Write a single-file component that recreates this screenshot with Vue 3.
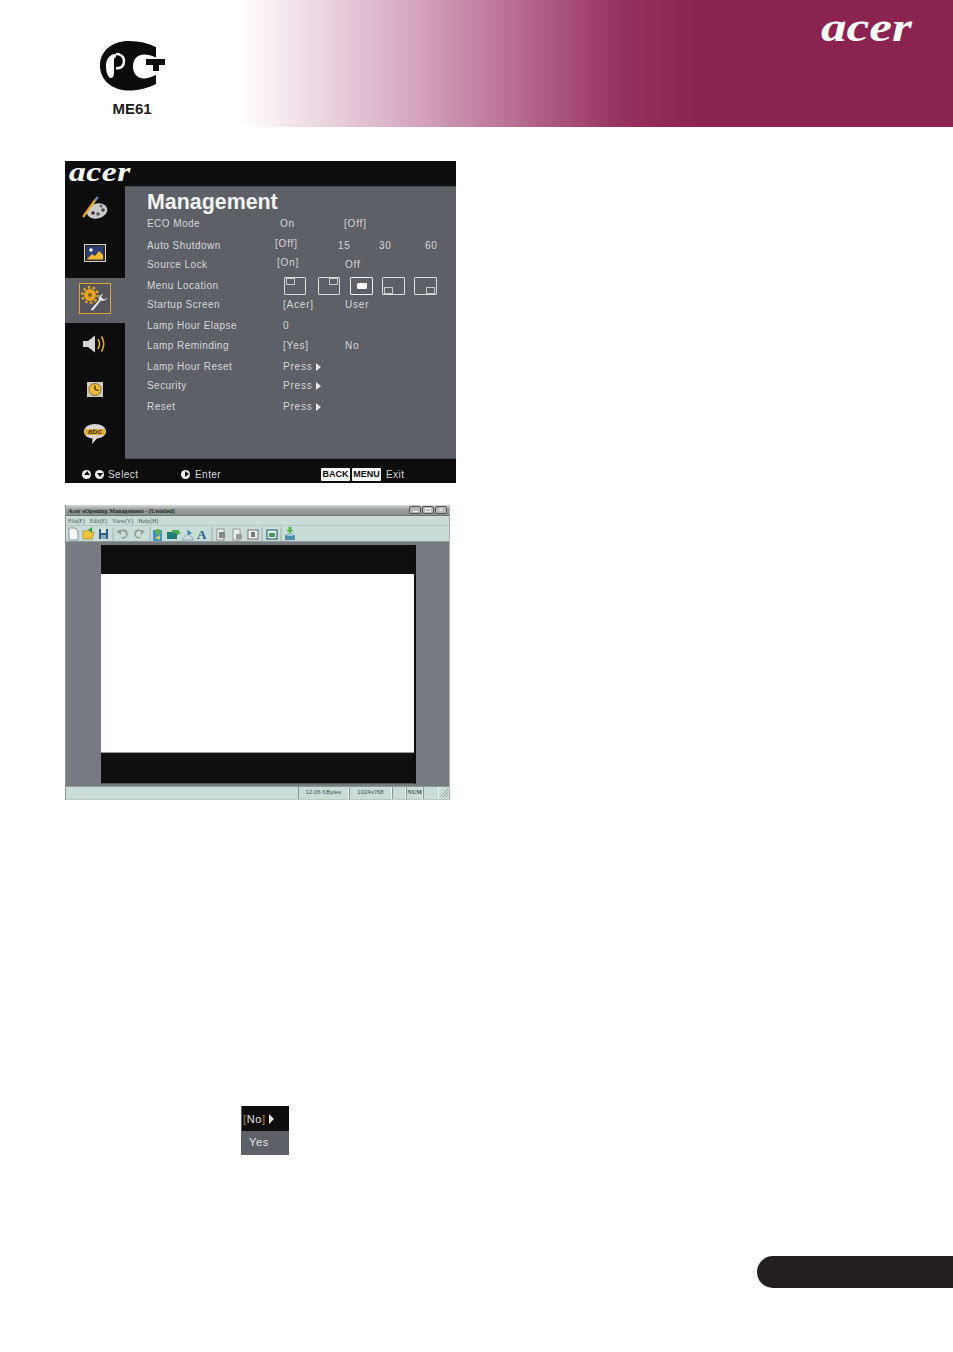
<script setup>
const rows = [
  { label: "ECO Mode", gap: 0, vals: [{ t: "On", x: 280 }, { t: "[Off]", x: 344 }] },
  { label: "Auto Shutdown", gap: 2, vals: [{ t: "[Off]", x: 275, up: true }, { t: "15", x: 338 }, { t: "30", x: 379 }, { t: "60", x: 425 }] },
  { label: "Source Lock", gap: -1, vals: [{ t: "[On]", x: 277, up: true }, { t: "Off", x: 345 }] },
  { label: "Menu Location", gap: 1, thumbs: true },
  { label: "Startup Screen", gap: -1, vals: [{ t: "[Acer]", x: 283 }, { t: "User", x: 345 }] },
  { label: "Lamp Hour Elapse", gap: 1, vals: [{ t: "0", x: 283 }] },
  { label: "Lamp Reminding", gap: 0, vals: [{ t: "[Yes]", x: 283 }, { t: "No", x: 345 }] },
  { label: "Lamp Hour Reset", gap: 1, vals: [{ t: "Press", x: 283, arrow: true }] },
  { label: "Security", gap: -1, vals: [{ t: "Press", x: 283, arrow: true }] },
  { label: "Reset", gap: 1, vals: [{ t: "Press", x: 283, arrow: true }] },
];

const thumbs = ["tl", "tr", "mid", "bl", "br"];

const LABEL_END = 275;

function cellStyle(row, i) {
  const v = row.vals[i];
  const next = row.vals[i + 1];
  return {
    marginLeft: i === 0 ? v.x - LABEL_END + "px" : 0,
    width: next ? next.x - v.x + "px" : "auto",
  };
}

const sideItems = ["palette", "picture", "tools", "sound", "clock", "bubble"];

const menus = ["File(F)", "Edit(E)", "View(V)", "Help(H)"];
</script>

<template>
  <div class="page">
    <header class="banner">
      <div class="cert">
        <svg class="pct" viewBox="95 36 72 58" width="72" height="58">
          <path d="M155 47C147 43 138 41 128 41C111 41 99 51 99 65.500C99 80 111 90.500 128 90.500C138 90.500 147 88 155 84L155 75C150 77 146 78.500 143 78.500C136 78.500 132 73 132 66.500C132 60 136 54.500 143 54.500C147 54.500 151 55.500 155 57.500Z" fill="#0c0c0c" />
          <path d="M115 54C108 54 105 60 105 66C105 72 107 78 110 78C113 78 113 74 113 70V60C113 58 114 57 115 57Z" fill="#fff" />
          <path d="M115 68C120 69 123 66 123 61C123 56 119 54 115 54" fill="none" stroke="#fff" stroke-width="2.500" />
          <path d="M145 59H164V65H158V71H152V65H145Z" fill="#0c0c0c" />
        </svg>
        <span class="cert-code">ME61</span>
      </div>
      <svg class="banner-logo" viewBox="0 0 92 30" width="92" height="30">
        <text x="0" y="28" textLength="91" lengthAdjust="spacingAndGlyphs" class="logo-text">acer</text>
      </svg>
    </header>

    <main class="content">
      <section class="osd">
        <div class="osd-top">
          <svg viewBox="0 0 64 22" width="64" height="22">
            <text x="0" y="20" textLength="62" lengthAdjust="spacingAndGlyphs" class="logo-text logo-small">acer</text>
          </svg>
        </div>
        <div class="osd-body">
          <nav class="side">
            <div v-for="item in sideItems" :key="item" class="side-item" :class="{ active: item === 'tools' }">
              <div class="side-icon">
                <svg v-if="item === 'palette'" viewBox="0 0 28 24" width="28" height="24">
                  <ellipse cx="16" cy="15" rx="10.500" ry="7.500" fill="#c9c9c9" transform="rotate(-14 16 15)" />
                  <circle cx="12" cy="17" r="1.800" fill="#333" />
                  <circle cx="17" cy="18" r="1.800" fill="#555" />
                  <circle cx="22" cy="14" r="1.800" fill="#444" />
                  <circle cx="20" cy="10" r="1.500" fill="#666" />
                  <path d="M2 21L15 3" stroke="#e7a92c" stroke-width="2.200" />
                  <path d="M14 4.500L17 1" stroke="#6d7fb5" stroke-width="2.200" />
                </svg>
                <svg v-else-if="item === 'picture'" viewBox="0 0 22 18" width="22" height="18">
                  <rect x="0.500" y="0.500" width="21" height="17" fill="#2b2b2b" stroke="#d9d3c0" />
                  <rect x="2.500" y="2.500" width="17" height="13" fill="#2d3f78" />
                  <circle cx="7" cy="6" r="1.700" fill="#fff" />
                  <path d="M3 15L8 10L11 12L15 7L19 11V15.500H3Z" fill="#f4b92e" />
                </svg>
                <div v-else-if="item === 'tools'" class="tool-box">
                  <svg viewBox="0 0 28 26" width="28" height="26">
                    <circle cx="9" cy="9" r="6" fill="#e9a31f" />
                    <circle cx="9" cy="9" r="7.800" fill="none" stroke="#e9a31f" stroke-width="2.400" stroke-dasharray="2.500 2.400" />
                    <circle cx="9" cy="9" r="2" fill="#7a5c1a" />
                    <path d="M9 24L12 25L20 15C23 16 26 14 27 11L23 13L20.500 11L23 7.500C19 8 16.500 11 17.500 14Z" fill="#e2e2e2" stroke="#333" stroke-width="0.600" />
                  </svg>
                </div>
                <svg v-else-if="item === 'sound'" viewBox="0 0 24 18" width="24" height="18">
                  <path d="M0 6H5L12 0.500V17.500L5 12H0Z" fill="#d6d6d6" />
                  <path d="M15 4Q18 9 15 14" fill="none" stroke="#e9b02c" stroke-width="1.500" />
                  <path d="M18.500 1.500Q23 9 18.500 16.500" fill="none" stroke="#e9b02c" stroke-width="1.500" />
                </svg>
                <svg v-else-if="item === 'clock'" viewBox="0 0 16 15" width="16" height="15">
                  <rect x="0" y="0" width="16" height="15" fill="#cfc9b5" />
                  <circle cx="8" cy="7.500" r="6" fill="#f2bb34" stroke="#544" stroke-width="0.700" />
                  <path d="M8 3.500V7.500L11.500 8.500" fill="none" stroke="#222" stroke-width="1.200" />
                </svg>
                <div v-else class="bubble">
                  <svg viewBox="0 0 22 20" width="22" height="20">
                    <path d="M11 0C17 0 22 3 22 7.500C22 12 17 14 13 14.500L8 20L8.500 14.500C4 14 0 12 0 7.500C0 3 5 0 11 0Z" fill="#d9d9d9" />
                    <rect x="1" y="5" width="20" height="6" fill="#e3ad2c" />
                  </svg>
                  <span class="bubble-text">abc</span>
                </div>
              </div>
            </div>
          </nav>
          <div class="panel">
            <h1 class="panel-title">Management</h1>
            <div class="rows">
              <div v-for="row in rows" :key="row.label" class="row" :style="{ marginTop: row.gap + 'px' }">
                <span class="label">{{ row.label }}</span>
                <div v-if="row.thumbs" class="thumbs">
                  <div v-for="t in thumbs" :key="t" class="thumb" :class="t"><i></i></div>
                </div>
                <template v-else>
                  <span
                    v-for="(v, i) in row.vals"
                    :key="v.t"
                    class="val"
                    :class="{ up: v.up }"
                    :style="cellStyle(row, i)"
                  >{{ v.t }}<i v-if="v.arrow" class="arrow"></i></span>
                </template>
              </div>
            </div>
          </div>
        </div>
        <footer class="osd-foot">
          <i class="round up-tri"></i>
          <i class="round down-tri"></i>
          <span class="foot-select">Select</span>
          <i class="round right-tri"></i>
          <span class="foot-enter">Enter</span>
          <b class="key">BACK</b>
          <b class="key key-menu">MENU</b>
          <span class="foot-exit">Exit</span>
        </footer>
      </section>

      <section class="win">
        <div class="win-title">
          <span class="win-name">Acer eOpening Management - [Untitled]</span>
          <div class="win-btns">
            <span class="win-btn"><i class="b-min"></i></span>
            <span class="win-btn"><i class="b-max"></i></span>
            <span class="win-btn"><i class="b-close">×</i></span>
          </div>
        </div>
        <div class="win-menu">
          <span v-for="m in menus" :key="m">{{ m }}</span>
        </div>
        <div class="win-tools">
          <svg viewBox="0 0 236 14" width="236" height="14">
            <!-- new / open / save -->
            <path d="M1 1H7L10 4V13H1Z" fill="#fff" stroke="#7d95a5" />
            <path d="M15 12V4H19L20 3H23V5H26L24 12Z" fill="#f2c53d" stroke="#9a7a20" stroke-width="0.600" />
            <path d="M20 3L24 0V6Z" fill="#3a9a3a" />
            <rect x="31" y="2" width="9" height="10" fill="#2c5f8c" />
            <rect x="33" y="2" width="5" height="4" fill="#dfe8ee" />
            <rect x="33" y="8" width="5" height="4" fill="#8ea8bd" />
            <path d="M45 0V14" stroke="#9fb1af" />
            <!-- undo / redo -->
            <path d="M51 5C54 2 59 3 59 7C59 10 56 11 54 11" fill="none" stroke="#8f9a99" stroke-width="1.600" />
            <path d="M48 4L53 3V8Z" fill="#8f9a99" />
            <path d="M75 5C72 2 67 3 67 7C67 10 70 11 72 11" fill="none" stroke="#8f9a99" stroke-width="1.600" />
            <path d="M77 4L73 3V8Z" fill="#8f9a99" />
            <path d="M82 0V14" stroke="#9fb1af" />
            <!-- image tools -->
            <rect x="85" y="3" width="9" height="11" fill="#3f8fd0" />
            <circle cx="90" cy="5" r="3" fill="#5fb04a" />
            <path d="M87 11L92 8V13Z" fill="#e7c33c" />
            <rect x="99" y="5" width="10" height="7" fill="#1f7d73" />
            <path d="M104 3H111V5L113 5.500L110 8L108 6H104Z" fill="#4ea94a" />
            <path d="M114 12L119 7L125 11V13H114Z" fill="#c9dde0" stroke="#5d8aa0" stroke-width="0.600" />
            <path d="M119 3L124 6L120 8Z" fill="#2f7fb0" />
            <text x="129" y="12" class="tool-a">A</text>
            <g transform="translate(3 0)">
              <path d="M141 0V14" stroke="#9fb1af" />
              <!-- page tools -->
              <rect x="146" y="2" width="7" height="11" fill="#e8eeec" stroke="#777" stroke-width="0.700" />
              <rect x="148" y="5" width="6" height="6" fill="#888" />
              <rect x="162" y="2" width="7" height="11" fill="#e8eeec" stroke="#777" stroke-width="0.700" />
              <rect x="165" y="7" width="6" height="5" fill="#999" />
              <rect x="177" y="3" width="10" height="9" fill="#f2f5f3" stroke="#555" stroke-width="0.800" />
              <rect x="180" y="5" width="4" height="5" fill="#777" />
              <path d="M191 0V14" stroke="#9fb1af" />
              <rect x="196" y="3" width="10" height="9" fill="#e6f0ee" stroke="#2d6c86" stroke-width="1.200" />
              <rect x="198" y="6" width="6" height="4" fill="#4d9a5d" />
              <path d="M210 0V14" stroke="#9fb1af" />
              <path d="M214 8H224V13H214Z" fill="#4f8ca8" />
              <path d="M216 6H222V9H216Z" fill="#9cc3d3" />
              <path d="M217.500 0H220.500V3H222.500L219 6.500L215.500 3H217.500Z" fill="#52b648" />
            </g>
          </svg>
        </div>
        <div class="win-canvas">
          <div class="slide">
            <div class="slide-band slide-top"></div>
            <div class="slide-white"></div>
            <div class="slide-band slide-bottom"></div>
          </div>
        </div>
        <div class="win-status">
          <span class="cell cell-size">12.06 KBytes</span>
          <span class="cell cell-res">1024x768</span>
          <span class="cell cell-a"></span>
          <span class="cell cell-num">NUM</span>
          <span class="cell cell-b"></span>
          <svg class="grip" viewBox="0 0 10 10" width="10" height="10">
            <path d="M1 9L9 1M4 9L9 4M7 9L9 7" stroke="#8b9795" stroke-width="0.900" />
          </svg>
        </div>
      </section>

      <section class="mini">
        <div class="mini-top">
          <span class="bracket">[</span>No<span class="bracket">]</span><i class="arrow mini-arrow"></i>
        </div>
        <div class="mini-bottom">Yes</div>
      </section>
    </main>

    <div class="pill"></div>
  </div>
</template>

<style scoped>
.page {
  width: 953px;
  height: 1352px;
  overflow: hidden;
  background: #fff;
  font-family: "Liberation Sans", Arial, sans-serif;
}

/* banner */
.banner {
  height: 127px;
  display: flex;
  justify-content: space-between;
  background: linear-gradient(to right, #fff 0, #fff 240px, #ecd6e2 320px, #d3a3bd 420px, #b56a90 520px, #96325f 620px, #8a2350 700px, #8a2350 100%);
}
.cert {
  margin: 36px 0 0 95px;
  width: 74px;
  display: flex;
  flex-direction: column;
  align-items: center;
}
.pct {
  display: block;
  flex: none;
}
.cert-code {
  margin-top: 6px;
  font-size: 15px;
  font-weight: bold;
  line-height: 17px;
  color: #1c1c1c;
}
.banner-logo {
  margin: 13px 40px 0 0;
  overflow: visible;
}
.logo-text {
  font-family: "Liberation Serif", serif;
  font-style: italic;
  font-weight: bold;
  font-size: 40px;
  fill: #fff;
}
.logo-small {
  font-size: 27px;
}

/* OSD */
.content {
  padding: 34px 0 0 65px;
}
.osd {
  width: 391px;
  height: 322px;
  background: #0d0d0d;
  display: flex;
  flex-direction: column;
  color: #d6d7d9;
  font-size: 10px;
  letter-spacing: 0.450px;
}
.osd-top {
  height: 25px;
  flex: none;
  padding-left: 4px;
}
.osd-top svg {
  display: block;
  overflow: visible;
}
.osd-body {
  flex: 1;
  display: flex;
  min-height: 0;
}
.side {
  width: 60px;
  flex: none;
  padding-top: 0.500px;
}
.side-item {
  height: 45.500px;
  display: flex;
  align-items: center;
  justify-content: center;
  padding-bottom: 3px;
  box-sizing: border-box;
}
.side-item.active {
  background: #5d6067;
}
.side-icon {
  display: flex;
  position: relative;
}
.tool-box {
  width: 32px;
  height: 31px;
  box-sizing: border-box;
  border: 1.500px solid #e0a52a;
  background: #54565c;
  display: flex;
  align-items: center;
  justify-content: center;
}
.bubble-text {
  position: absolute;
  left: 0;
  right: 0;
  top: 4px;
  text-align: center;
  font-size: 8px;
  line-height: 8px;
  font-weight: bold;
  letter-spacing: 0;
  color: #4a3a10;
}
.panel {
  flex: 1;
  background: #5d6067;
  border-top: 1px solid #45474c;
  border-bottom: 1px solid #45474c;
  padding: 4px 0 0 22px;
  min-width: 0;
}
.panel-title {
  margin: 0;
  font-size: 21.400px;
  line-height: 22.500px;
  font-weight: bold;
  letter-spacing: 0;
  color: #f4f4f4;
}
.row {
  height: 20px;
  display: flex;
  align-items: center;
  white-space: nowrap;
}
.label {
  width: 128px;
  flex: none;
}
.val {
  flex: none;
  display: flex;
  align-items: center;
  letter-spacing: 0.800px;
}
.val.up {
  margin-bottom: 5px;
}
.arrow {
  display: inline-block;
  margin-left: 3px;
  width: 0;
  height: 0;
  border-left: 5px solid #e8e8e8;
  border-top: 4px solid transparent;
  border-bottom: 4px solid transparent;
}
.thumbs {
  margin-left: 9px;
  display: flex;
  gap: 9px;
}
.thumb {
  width: 22px;
  height: 18px;
  box-sizing: border-box;
  border: 1px solid #dcdcdc;
  border-radius: 1px;
  display: flex;
}
.thumb i {
  width: 9px;
  height: 7px;
  box-sizing: border-box;
  border: 1px solid #c9c9c9;
}
.thumb.tl {
  margin-right: 3px;
}
.thumb.tl i {
  margin-left: 1px;
}
.thumb.tr {
  justify-content: flex-end;
  margin-right: 1px;
}
.thumb.tr i {
  margin-right: 1px;
}
.thumb.mid {
  width: 23px;
  border-width: 1.500px;
  border-color: #f2f2f2;
  align-items: center;
  justify-content: center;
}
.thumb.mid i {
  width: 10px;
  height: 6px;
  background: #fff;
  border: 0;
  border-radius: 1px;
}
.thumb.bl {
  width: 23px;
  align-items: flex-end;
}
.thumb.bl i {
  margin-left: 1px;
}
.thumb.br {
  width: 23px;
  align-items: flex-end;
  justify-content: flex-end;
}
.thumb.br i {
  margin-right: 1px;
}
.osd-foot {
  height: 24px;
  flex: none;
  box-sizing: border-box;
  display: flex;
  align-items: center;
  padding: 6px 0 0 17px;
}
.round {
  width: 9px;
  height: 9px;
  flex: none;
  border-radius: 50%;
  background: #f2f2f2;
  position: relative;
}
.round::after {
  content: "";
  position: absolute;
  width: 0;
  height: 0;
}
.up-tri::after {
  left: 1.500px;
  top: 1px;
  border: 3px solid transparent;
  border-top: 0;
  border-bottom: 4px solid #0d0d0d;
}
.down-tri {
  margin-left: 4px;
}
.down-tri::after {
  left: 1.500px;
  top: 3px;
  border: 3px solid transparent;
  border-bottom: 0;
  border-top: 4px solid #0d0d0d;
}
.right-tri {
  margin-left: 42px;
}
.right-tri::after {
  left: 4px;
  top: 1.500px;
  border: 3px solid transparent;
  border-right: 0;
  border-left: 4px solid #0d0d0d;
}
.foot-select {
  margin-left: 4px;
  width: 31px;
  flex: none;
}
.foot-enter {
  margin-left: 5px;
  width: 26px;
  flex: none;
}
.key {
  margin-left: 100px;
  width: 29px;
  height: 13px;
  flex: none;
  background: #fafafa;
  color: #0d0d0d;
  font-size: 9px;
  letter-spacing: 0;
  line-height: 13px;
  text-align: center;
  border-radius: 1px;
}
.key-menu {
  margin-left: 2px;
}
.foot-exit {
  margin-left: 5px;
}

/* eOpening window */
.win {
  margin-top: 22px;
  width: 385px;
  height: 295px;
  box-sizing: border-box;
  display: flex;
  flex-direction: column;
  background: #c9dcd8;
  border-left: 1px solid #8f9490;
  border-right: 1px solid #a8b3b1;
  border-bottom: 1px solid #c0c4c3;
}
.win-title {
  height: 11px;
  flex: none;
  box-sizing: border-box;
  display: flex;
  align-items: center;
  justify-content: space-between;
  padding: 0 2px;
  background: linear-gradient(#d6d8d7, #9ba09d 45%, #8a8e8c);
  border-bottom: 1px solid #6e7370;
}
.win-name {
  font-family: "Liberation Serif", serif;
  font-size: 6.200px;
  font-weight: bold;
  color: #1c2b28;
  white-space: nowrap;
}
.win-btns {
  display: flex;
  gap: 1px;
}
.win-btn {
  width: 12px;
  height: 8px;
  box-sizing: border-box;
  border: 1px solid #555;
  border-radius: 2px;
  background: #b3b8b5;
  display: flex;
  align-items: center;
  justify-content: center;
}
.b-min {
  width: 5px;
  height: 1px;
  background: #f2f2f2;
  margin-top: 3px;
}
.b-max {
  width: 6px;
  height: 4px;
  border: 1px solid #eee;
  box-sizing: border-box;
}
.b-close {
  font-size: 8px;
  line-height: 6px;
  font-style: normal;
  color: #fff;
}
.win-menu {
  height: 10px;
  flex: none;
  box-sizing: border-box;
  display: flex;
  align-items: center;
  gap: 5px;
  padding-left: 2px;
  font-family: "Liberation Serif", serif;
  font-size: 6px;
  color: #4f5c59;
  border-bottom: 1px solid #b6c8c4;
}
.win-tools {
  height: 16px;
  flex: none;
  padding: 1px 0 0 2px;
  box-sizing: border-box;
  border-bottom: 1px solid #8d9895;
}
.win-tools svg {
  display: block;
}
.tool-a {
  font-family: "Liberation Serif", serif;
  font-size: 13px;
  font-weight: bold;
  fill: #2a5f8a;
}
.win-canvas {
  flex: 1;
  min-height: 0;
  background: #777a81;
  padding: 3px 0 2px 35px;
}
.slide {
  width: 315px;
  height: 100%;
  box-sizing: border-box;
  border-right: 2px solid #0d0d0d;
  border-bottom: 1px solid #555;
  display: flex;
  flex-direction: column;
  background: #fff;
}
.slide-band {
  background: #0f0f0f;
  flex: none;
}
.slide-top {
  height: 29px;
}
.slide-white {
  flex: 1;
}
.slide-bottom {
  height: 31px;
  box-sizing: border-box;
  border-top: 1px solid #999;
}
.win-status {
  height: 13px;
  flex: none;
  box-sizing: border-box;
  display: flex;
  align-items: stretch;
  padding-left: 232px;
  font-size: 6px;
  color: #47514f;
  border-top: 1px solid #8d9895;
}
.cell {
  box-sizing: border-box;
  border-left: 1px solid #8c9997;
  border-right: 1px solid #eef4f2;
  text-align: center;
  line-height: 11px;
}
.cell-size {
  width: 51px;
}
.cell-res {
  width: 44px;
}
.cell-a {
  width: 14px;
}
.cell-num {
  width: 17px;
  font-family: "Liberation Serif", serif;
  font-weight: bold;
}
.cell-b {
  width: 16px;
}
.grip {
  margin: 1px 0 0 auto;
}

/* small drop-down */
.mini {
  margin: 306px 0 0 176px;
  width: 48px;
  height: 49px;
  box-sizing: border-box;
  border-left: 1px solid #5d6067;
  font-size: 11px;
  letter-spacing: 0.600px;
  display: flex;
  flex-direction: column;
}
.mini-top {
  height: 25px;
  flex: none;
  background: #0d0d0d;
  color: #e4e4e4;
  display: flex;
  align-items: center;
  padding-left: 1px;
}
.bracket {
  color: #b58a35;
}
.mini-arrow {
  margin-left: 3px;
  border-top-width: 5px;
  border-bottom-width: 5px;
}
.mini-bottom {
  flex: 1;
  background: #5d6067;
  color: #e4e4e4;
  display: flex;
  align-items: center;
  padding: 0 0 2px 7px;
}

/* page-number tab */
.pill {
  margin: 101px 0 0 757px;
  height: 32px;
  background: #231f20;
  border-radius: 16px 0 0 16px;
}
</style>
